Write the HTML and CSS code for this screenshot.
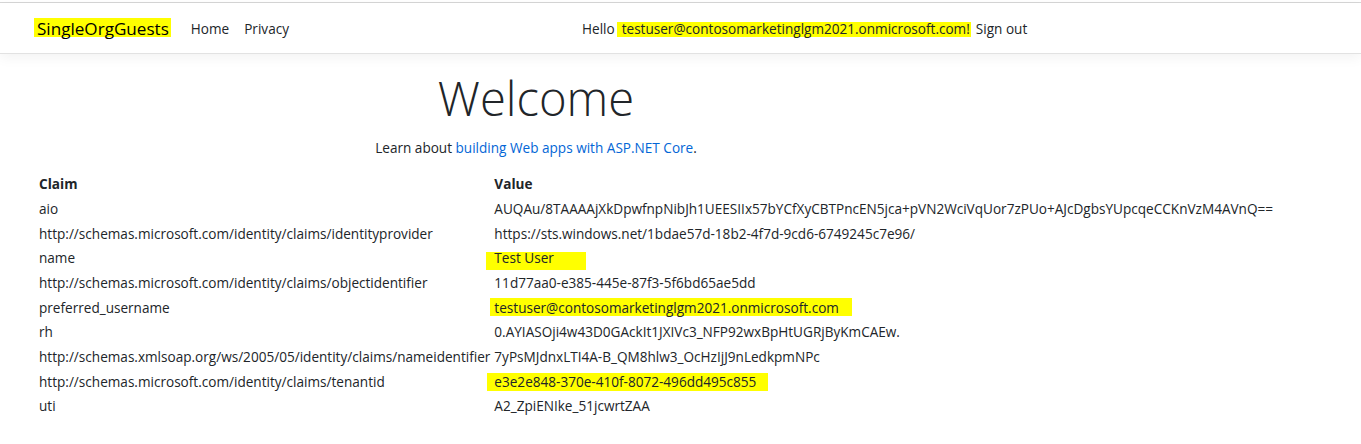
FILE: index.html
```html
<!DOCTYPE html>
<html lang="en">
<head>
<meta charset="utf-8">
<title>Home Page - SingleOrgGuests</title>
<link rel="stylesheet" href="styles.css">
</head>
<body>
<div class="chrome"></div>
<header class="navbar">
  <div class="nav-left">
    <a class="brand" href="#"><span class="hl hl-brand">SingleOrgGuests</span></a>
    <nav class="links">
      <a href="#">Home</a>
      <a href="#">Privacy</a>
    </nav>
  </div>
  <div class="user">
    <span class="hello">Hello</span>
    <span class="hl hl-hello">testuser@contosomarketinglgm2021.onmicrosoft.com!</span>
    <a class="signout" href="#">Sign out</a>
  </div>
</header>
<main class="main">
  <section class="hero">
    <h1>Welcome</h1>
    <p>Learn about <a href="#">building Web apps with ASP.NET Core</a>.</p>
  </section>
  <table class="claims">
    <thead>
      <tr><th>Claim</th><th>Value</th></tr>
    </thead>
    <tbody>
      <tr><td>aio</td><td>AUQAu/8TAAAAjXkDpwfnpNibJh1UEESIIx57bYCfXyCBTPncEN5jca+pVN2WciVqUor7zPUo+AJcDgbsYUpcqeCCKnVzM4AVnQ==</td></tr>
      <tr><td>http://schemas.microsoft.com/identity/claims/identityprovider</td><td>https://sts.windows.net/1bdae57d-18b2-4f7d-9cd6-6749245c7e96/</td></tr>
      <tr><td>name</td><td><span class="hl hl-name">Test User</span></td></tr>
      <tr><td>http://schemas.microsoft.com/identity/claims/objectidentifier</td><td>11d77aa0-e385-445e-87f3-5f6bd65ae5dd</td></tr>
      <tr><td>preferred_username</td><td><span class="hl hl-pref">testuser@contosomarketinglgm2021.onmicrosoft.com</span></td></tr>
      <tr><td>rh</td><td>0.AYIASOji4w43D0GAckIt1JXIVc3_NFP92wxBpHtUGRjByKmCAEw.</td></tr>
      <tr><td>http://schemas.xmlsoap.org/ws/2005/05/identity/claims/nameidentifier</td><td>7yPsMJdnxLTI4A-B_QM8hlw3_OcHzIjJ9nLedkpmNPc</td></tr>
      <tr><td>http://schemas.microsoft.com/identity/claims/tenantid</td><td><span class="hl hl-tenant">e3e2e848-370e-410f-8072-496dd495c855</span></td></tr>
      <tr><td>uti</td><td>A2_ZpiENIke_51jcwrtZAA</td></tr>
    </tbody>
  </table>
</main>
</body>
</html>
```
FILE: styles.css
```css
html, body {
  margin: 0;
  padding: 0;
  background: #ffffff;
}

body {
  font-family: "Open Sans", "Noto Sans", "Liberation Sans", sans-serif;
  font-size: 13.58px;
  color: #212529;
}

a {
  color: #0366d6;
  text-decoration: none;
}

.chrome {
  height: 2px;
  border-bottom: 1px solid #d6d6d6;
  background: #ffffff;
}

.navbar {
  display: flex;
  align-items: center;
  height: 50px;
  border-bottom: 1px solid #e2e2e2;
  box-shadow: 0 4px 12px rgba(0, 0, 0, 0.05);
  background: #ffffff;
}

.nav-left {
  display: flex;
  align-items: center;
  width: 582px;
  padding-left: 34px;
  box-sizing: border-box;
}

.brand {
  color: #000000;
  font-size: 17.1px;
  margin-right: 20px;
}

.hl {
  display: inline-block;
  background: #ffff00;
}

.hl-brand {
  height: 19px;
  line-height: 22.7px;
  padding: 0 2px 0 3px;
  margin-top: -6px;
}

.links {
  display: flex;
  gap: 15px;
}

.links a,
.signout,
.hello {
  color: #212529;
}

.user {
  display: flex;
  align-items: baseline;
}

.hl-hello {
  height: 15px;
  line-height: 13.5px;
  padding: 0 1px 0 5px;
  margin-left: 2px;
  margin-right: 5px;
}

.main {
  padding: 0 36px;
}

.hero {
  width: 1000px;
  text-align: center;
}

.hero h1 {
  margin: 16px 0 0;
  font-size: 47.2px;
  font-weight: 300;
  line-height: 1.2;
}

.hero p {
  margin: 11px 0 0;
  line-height: 20.6px;
}

.claims {
  margin-top: 13.2px;
  border-collapse: separate;
  border-spacing: 2px;
  white-space: nowrap;
}

.claims th,
.claims td {
  padding: 1px;
  text-align: left;
  line-height: 20.67px;
  vertical-align: top;
}

.claims th {
  font-weight: 700;
}

.hl-name {
  height: 18px;
  line-height: 11.5px;
  margin: -4px 0 -4px -8px;
  padding: 0 32px 0 8px;
}

.hl-pref {
  height: 18px;
  line-height: 20px;
  margin: -4px 0 -4px -4px;
  padding: 0 13px 0 4px;
}

.hl-tenant {
  height: 18px;
  line-height: 18px;
  margin: -4px 0 -4px -7px;
  padding: 0 12px 0 7px;
}
```
